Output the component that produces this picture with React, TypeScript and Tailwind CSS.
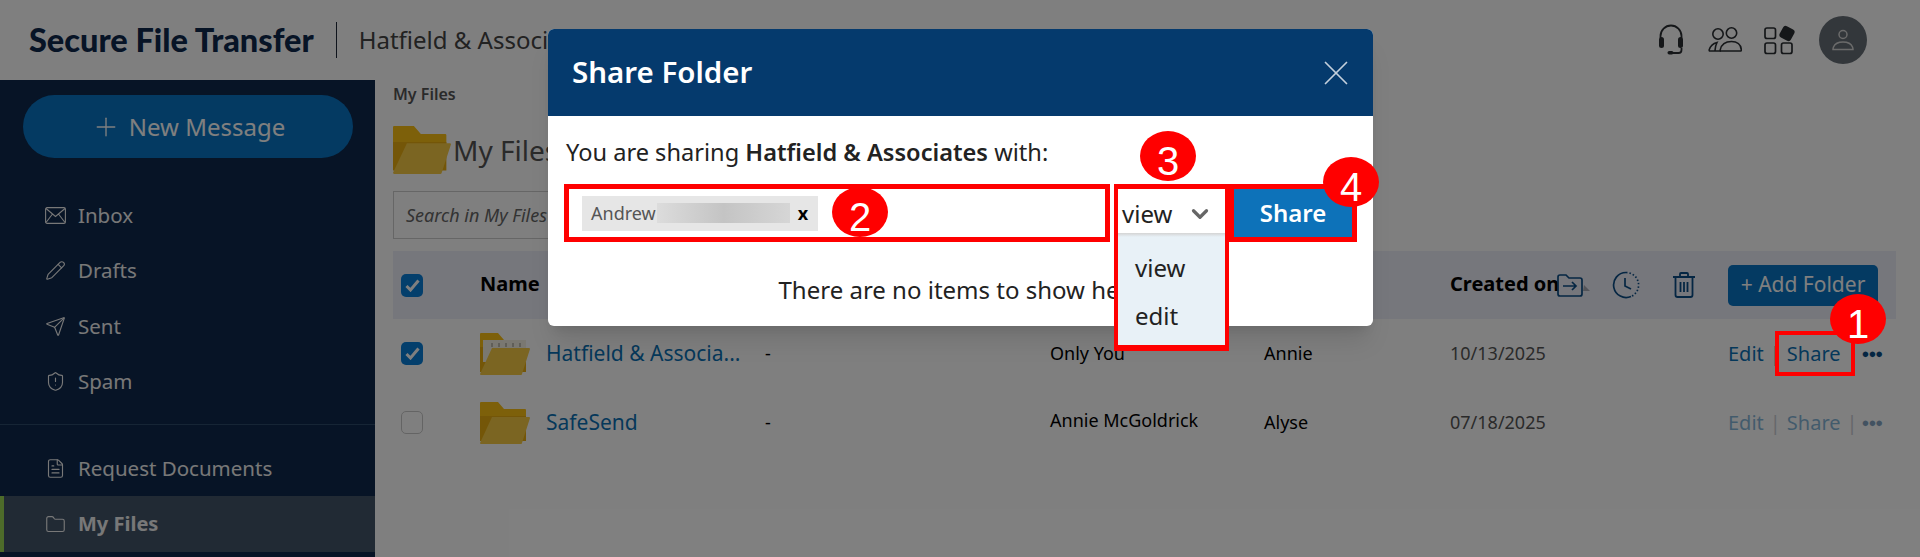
import { ChevronDown, FileText, Folder, Pencil, Plus, Send, ShieldAlert, X } from "lucide-react";
import type { ReactNode } from "react";

function FolderArt({ w, h, paper }: { w: number; h: number; paper?: boolean }) {
  return <svg width={w} height={h} viewBox="0 0 50 42" preserveAspectRatio="none" className="shrink-0">
    <path d="M0 1q0-1 1-1h17l6 7h21q1 0 1 1v12H0z" fill="#fac014" />
    <path d="M0 14h46v25H0z" fill="#e9ad10" />
    {paper && <><path d="M3 7h43v22H3z" fill="#f5f1e2" /><path d="M12 10v4M19 10v4M26 10v4M33 10v4M40 10v4" stroke="#8c8a80" strokeWidth="1" /></>}
    <path d="M12 15h37q1 0 1 1l-8 25q0 1-1 1H1q-1 0-1-1z" fill="#f6ca44" />
  </svg>;
}

function HeadsetIcon() {
  return <svg width="26" height="32" viewBox="0 0 26 32" fill="none" stroke="#2b2f33" strokeWidth="1.8">
    <path d="M2.500 14V12a10.500 10.500 0 0 1 21 0v2" />
    <rect x="1" y="13" width="5" height="11" rx="2.500" fill="#2b2f33" stroke="none" />
    <rect x="20" y="13" width="5" height="11" rx="2.500" fill="#2b2f33" stroke="none" />
    <path d="M23.500 24v2q0 3-3 3h-6" />
    <rect x="9.500" y="27" width="6" height="3.500" rx="1.700" fill="#2b2f33" stroke="none" />
  </svg>;
}

function PeopleIcon() {
  return <svg width="34" height="26" viewBox="0 0 34 26" fill="none" stroke="#2b2f33" strokeWidth="1.6">
    <circle cx="10" cy="7" r="5.200" /><circle cx="23.500" cy="6" r="5.200" />
    <path d="M13 24H2q-1 0-.8-1.200Q3 17 9 15.500q-1.800 3.500-2 8" />
    <path d="M13 24q-1 0-.8-1.200C13.500 17 18 14.500 23.500 14.500S33 17.500 33.300 22.800q.2 1.200-1 1.200z" />
  </svg>;
}

function AppsIcon() {
  return <svg width="31" height="30" viewBox="0 0 31 30" fill="none" stroke="#2b2f33" strokeWidth="1.7">
    <rect x="1" y="3" width="10.500" height="10.500" rx="2" /><rect x="1" y="18" width="10.500" height="10.500" rx="2" /><rect x="17.500" y="18" width="10.500" height="10.500" rx="2" />
    <rect x="17.500" y="3" width="11" height="11" rx="2" transform="rotate(28 23 8.500)" fill="#2b2f33" />
  </svg>;
}

function UserIcon() {
  return <svg width="22" height="22" viewBox="0 0 22 22" fill="none" stroke="#d6d6d6" strokeWidth="1.5">
    <circle cx="11" cy="5.500" r="4" /><path d="M1 20.500q0-1 .5-2.500C3 14.500 7 13 11 13s8 1.500 9.500 5q.5 1.500.5 2.500z" />
  </svg>;
}

function EnvelopeIcon() {
  return <svg width="21" height="17" viewBox="0 0 21 17" fill="none" stroke="currentColor" strokeWidth="1.1">
    <rect x=".6" y=".6" width="19.800" height="15.800" rx="1.500" /><path d="M1 1.500l9.500 8 9.500-8M1 15.500l6.500-8.500M20 15.500L13.500 7" />
  </svg>;
}

function MoveIcon() {
  return <svg width="34" height="26" viewBox="0 0 34 26" fill="none" stroke="#0b4d86" strokeWidth="1.7" className="shrink-0">
    <path d="M27 13l6 6H26z" fill="#a9abb4" stroke="none" />
    <path d="M1 5q0-2 2-2h6l3 3h11q2 0 2 2v14q0 2-2 2H3q-2 0-2-2z" /><path d="M6 14h13M15 10l4 4-4 4" />
  </svg>;
}

function ClockIcon() {
  return <svg width="28" height="28" viewBox="0 0 28 28" fill="none" stroke="#0b4d86" strokeWidth="1.7" className="shrink-0">
    <path d="M14 1.500a12.500 12.500 0 1 0 5 24" /><path d="M14 1.500a12.500 12.500 0 0 1 5 24" strokeDasharray="1.500 2" /><path d="M13 7v8l6 3" />
  </svg>;
}

function TrashIcon() {
  return <svg width="24" height="26" viewBox="0 0 24 26" fill="none" stroke="#0b4d86" strokeWidth="1.8" className="shrink-0">
    <path d="M1 5h22M8 4V2q0-1 1-1h6q1 0 1 1v2M3.500 5v18q0 2 2 2h13q2 0 2-2V5M8.500 10v10M12 10v10M15.500 10v10" />
  </svg>;
}

function Box({ on, faint }: { on?: boolean; faint?: boolean }) {
  return on
    ? <span className="grid h-[23px] w-[22px] place-items-center rounded-[5px] bg-[#087ed8]">
      <svg width="15" height="13" viewBox="0 0 15 13" fill="none" stroke="#fff" strokeWidth="3"><path d="M1.500 7l4 4 8-9.500" /></svg>
    </span>
    : <span className={`h-[23px] w-[22px] rounded-[5px] border ${faint ? "border-[#c9c9c9]" : "border-gray-400"}`} />;
}

function NavItem({ icon, label }: { icon: ReactNode; label: string }) {
  return <div className="flex h-[55px] items-center pl-[45px] text-[20.500px] text-[#f0f0f0]">
    <span className="flex w-[33px] shrink-0">{icon}</span>{label}
  </div>;
}

function Row({ on, name, shared, by, date, faint }: { on?: boolean; name: string; shared: string; by: string; date: string; faint?: boolean }) {
  return <div className="grid h-[69px] grid-cols-[87px_285px_285px_214px_186px_278px_168px] items-center">
    <div className="pl-2 flex"><Box on={on} faint={faint} /></div>
    <div className="flex items-center">
      <span className="flex w-[66px]"><FolderArt w={50} h={42} paper={on} /></span>
      <span className="text-[21px] text-[#0b71b5]">{name}</span>
    </div>
    <div className="text-[18px] text-black">-</div>
    <div className={`text-[18px] text-black ${faint ? "-mt-1" : ""}`}>{shared}</div>
    <div className="text-[18px] text-black">{by}</div>
    <div className="text-[18px] text-[#555]">{date}</div>
    <div className={`flex items-center text-[20px] text-[#0b71b5] ${faint ? "opacity-50" : ""}`}>
      Edit<span className="mx-1.5 text-gray-400">|</span>Share{faint && <span className="ml-1.5 text-gray-400">|</span>}
      <span className={`text-[#0b4d86] text-[13px] tracking-[-1px] font-black ${faint ? "ml-1" : "ml-[21px]"}`}>●●●</span>
    </div>
  </div>;
}

function Dot({ n, className }: { n: number; className: string }) {
  return <span className={`absolute z-30 grid h-[50px] w-[56px] place-items-center rounded-[50%] bg-[#ff0000] font-['Liberation_Sans',sans-serif] text-[40px] text-white ${className}`}>{n}</span>;
}

export default function App() {
  return <div className="relative h-[557px] w-[1920px] overflow-hidden bg-white font-['Noto_Sans',sans-serif]">
    <header className="flex h-20 items-center bg-white pl-[29px] pr-[53px]">
      <span className="font-['Lato',sans-serif] text-[32.500px] font-black text-[#0e284c]">Secure File Transfer</span>
      <span className="mx-[22px] h-9 w-px bg-gray-800" />
      <span className="text-[24px] text-[#444]">Hatfield &amp; Associates</span>
      <div className="ml-auto flex items-center">
        <HeadsetIcon />
        <span className="ml-[24px] flex"><PeopleIcon /></span>
        <span className="ml-[22px] flex"><AppsIcon /></span>
        <span className="ml-6 grid h-12 w-12 place-items-center rounded-full bg-[#666e76]"><UserIcon /></span>
      </div>
    </header>
    <div className="flex h-[477px]">
      <aside className="w-[375px] shrink-0 bg-[#0e284c] pt-[15px]">
        <button className="mx-[23px] flex h-[63px] w-[330px] items-center justify-center gap-2 rounded-full bg-[#0874c4] text-[24px] text-white">
          <Plus size={30} strokeWidth={1.1} />New Message
        </button>
        <div className="mt-[30px] h-[237px] border-b border-[#2c4a6b]">
          <NavItem icon={<EnvelopeIcon />} label="Inbox" />
          <NavItem icon={<Pencil size={21} strokeWidth={1.3} />} label="Drafts" />
          <div className="pt-px">
            <NavItem icon={<Send size={21} strokeWidth={1.3} />} label="Sent" />
            <NavItem icon={<ShieldAlert size={21} strokeWidth={1.3} />} label="Spam" />
          </div>
        </div>
        <div className="pt-4">
          <NavItem icon={<FileText size={21} strokeWidth={1.3} />} label="Request Documents" />
          <div className="flex h-14 items-center border-l-4 border-[#9ad654] bg-[#425468] pl-[41px] text-[20px] font-bold text-[#f0f0f0]">
            <span className="flex w-[33px] shrink-0"><Folder size={21} strokeWidth={1.3} /></span>My Files
          </div>
        </div>
      </aside>
      <main className="min-w-0 flex-1 pl-[18px] pr-6">
        <div className="text-[16px] font-semibold leading-7 text-[#555]">My Files</div>
        <div className="mt-[18px] flex h-12 items-center">
          <FolderArt w={58} h={48} />
          <span className="ml-0.5 text-[28px] text-[#555]">My Files</span>
        </div>
        <div className="mt-[17px] flex h-[48px] w-[480px] items-center border border-[#cdcdcd] px-3 text-[18px] italic text-[#666]">Search in My Files</div>
        <div className="mt-3 grid h-[68px] grid-cols-[87px_285px_285px_214px_186px_278px_168px] items-center bg-[#eceef8] text-[20px] font-bold text-black">
          <div className="pl-2 flex"><Box on /></div>
          <div className="-mt-0.5">Name</div>
          <div />
          <div />
          <div />
          <div className="flex items-center">
            <span className="-mt-0.5 w-[107px] shrink-0 whitespace-nowrap">Created on</span>
            <MoveIcon />
            <span className="ml-[21px] flex"><ClockIcon /></span>
            <span className="ml-[32px] flex"><TrashIcon /></span>
          </div>
          <div><span className="flex h-[41px] w-[150px] items-center justify-center rounded-[5px] bg-[#0874c4] text-[21px] font-normal text-white">+ Add Folder</span></div>
        </div>
        <Row on name="Hatfield & Associa..." shared="Only You" by="Annie" date="10/13/2025" />
        <Row faint name="SafeSend" shared="Annie McGoldrick" by="Alyse" date="07/18/2025" />
      </main>
    </div>

    <div className="absolute inset-0 z-10 bg-black/50" />

    {/* annotation on the row behind the dialog */}
    <span className="absolute left-[1775px] top-[331px] z-20 h-[45px] w-[80px] border-4 border-[#ff0000]" />
    <Dot n={1} className="left-[1830px] top-[294px]" />

    <div className="absolute left-[548px] top-[29px] z-20 h-[297px] w-[825px] overflow-visible rounded-md bg-white shadow-xl">
      <div className="flex h-[87px] items-center justify-between rounded-t-md bg-[#053a6d] pl-6 pr-[16px]">
        <span className="text-[29.500px] font-semibold text-white">Share Folder</span>
        <X size={42} strokeWidth={1} color="#c4cfdb" />
      </div>
      <div className="pl-4 pr-4">
        <p className="ml-0.5 mt-[21px] text-[23.600px] leading-[30px] text-[#222]">You are sharing <b className="font-semibold">Hatfield &amp; Associates</b> with:</p>
        <div className="mt-[17px] flex h-[58px]">
          <div className="flex w-[546px] items-center border-[5px] border-[#ff0000] pl-[13px]">
            <span className="flex h-[35px] w-[236px] items-center bg-[#e6e6e6] pl-[9px] text-[18px] text-[#555]">
              Andrew
              <span className="ml-px h-5 w-[133px] bg-gradient-to-r from-[#dcdcdc] via-[#c4c4c4] to-[#d6d6d6]" />
              <span className="ml-2 text-[18px] font-bold text-black">x</span>
            </span>
          </div>
          <div className="relative ml-1 w-[115px] border-x-[4px] border-t-[5px] border-[#ff0000]">
            <div className="flex h-[49px] items-center justify-between pl-1 pr-3 text-[24px] text-[#222]">view<ChevronDown size={26} strokeWidth={3} color="#666" /></div>
            <div className="absolute -left-1 top-[44px] z-20 h-[118px] w-[115px] border-x-[4px] border-b-[6px] border-[#ff0000] bg-[#e8f1f7] pl-[17px] pt-[11px] text-[24px] leading-[48px] text-[#222]">
              <div className="absolute left-0 right-0 top-0 h-1 bg-gradient-to-b from-[#d4d4d4] to-[#e8f1f7]" />
              <div>view</div>
              <div>edit</div>
            </div>
          </div>
          <div className="w-[128px] border-[5px] border-[#ff0000] bg-[#0d72b9]">
            <div className="flex h-full items-center justify-center text-[24px] font-semibold text-white">Share</div>
          </div>
        </div>
        <p className="mt-[32px] text-center text-[24px] leading-8 text-[#222]">There are no items to show here</p>
      </div>
    </div>
    <Dot n={2} className="left-[832px] top-[187px]" />
    <Dot n={3} className="left-[1140px] top-[131px]" />
    <Dot n={4} className="left-[1323px] top-[157px]" />
  </div>;
}
